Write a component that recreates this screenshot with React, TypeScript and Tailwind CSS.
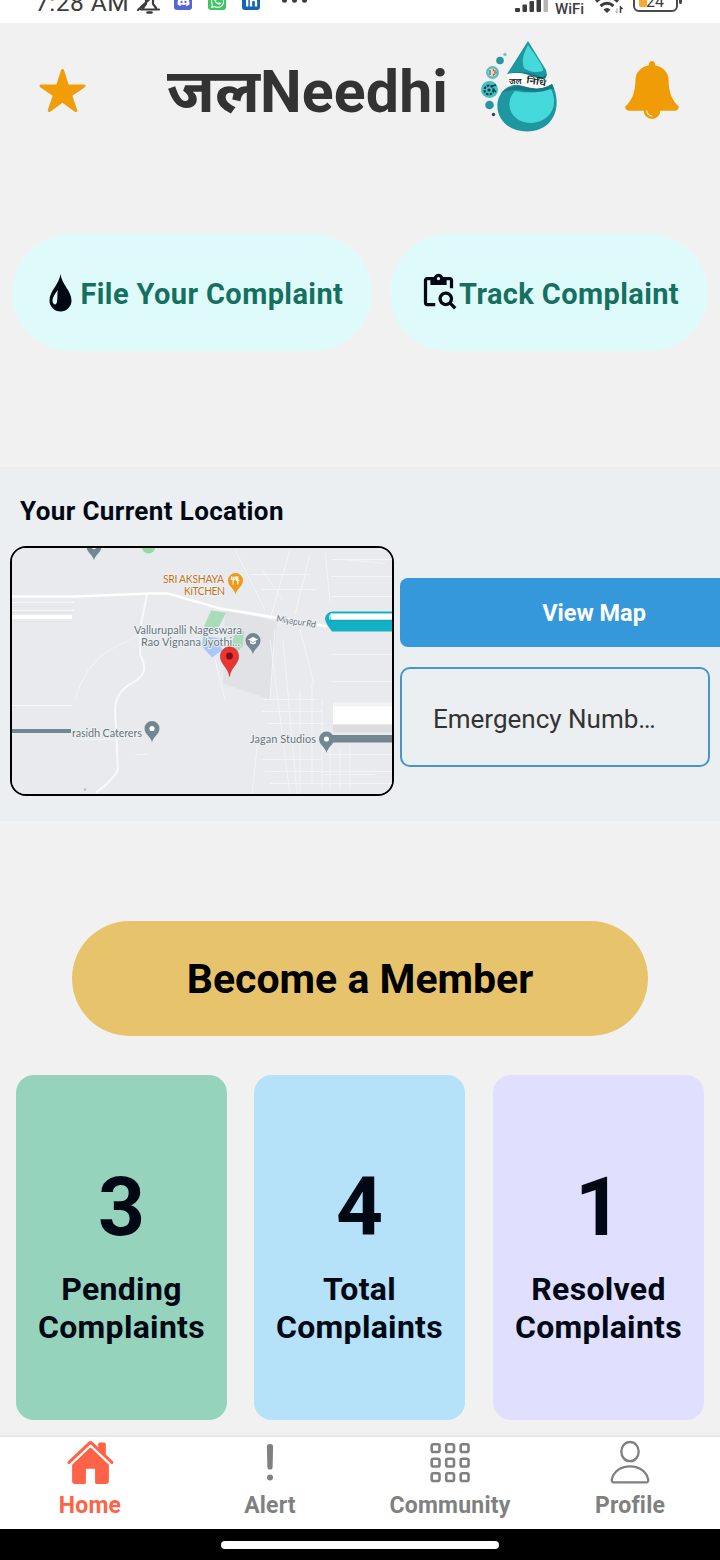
import type { ReactNode } from "react";
import { IoHome, IoStar } from "react-icons/io5";
import { FaDiscord, FaLinkedinIn, FaWhatsapp } from "react-icons/fa";

function StatusBar() {
  return (
    <div className="relative h-[23px] shrink-0 overflow-hidden bg-white text-[#3c3c3c]">
      <span className="absolute left-[35px] top-[-11px] text-[24.500px] leading-7 tracking-[0.5px] whitespace-nowrap">7:28 AM</span>
      <svg className="absolute left-[136px] top-[-12px]" width="26" height="26" viewBox="0 0 26 26" fill="none" stroke="#3c3c3c" strokeWidth="2.2" strokeLinecap="round">
        <path d="M5 21.500h18M7 20l3-4V9M20 20l-3-4V8M20 5L2 22" />
        <path d="M11.500 24.500h4" strokeWidth="2.5" />
      </svg>
      <div className="absolute left-[174px] top-[-8px] flex h-[18px] w-[18px] items-center justify-center rounded-[3px] bg-[#5865d8] text-white">
        <FaDiscord size={13} />
      </div>
      <div className="absolute left-[208px] top-[-8px] flex h-[18px] w-[18px] items-center justify-center rounded-[3px] bg-[#3cc763] text-white">
        <FaWhatsapp size={15} />
      </div>
      <div className="absolute left-[242px] top-[-8px] flex h-[18px] w-[18px] items-center justify-center rounded-[3px] bg-[#1763b4] text-white">
        <FaLinkedinIn size={13} />
      </div>
      <svg className="absolute left-[280px] top-0" width="30" height="4" viewBox="0 0 30 4" fill="#3c3c3c">
        <circle cx="4.500" cy="0.300" r="2.500" />
        <circle cx="14.500" cy="0.300" r="2.500" />
        <circle cx="24.500" cy="0.300" r="2.500" />
      </svg>
      <svg className="absolute left-[515px] top-0" width="34" height="13" viewBox="0 0 34 13" fill="#3c3c3c">
        <rect x="0" y="8" width="5" height="4" rx="1" />
        <rect x="7.500" y="4.500" width="4.500" height="7.500" rx="1" />
        <rect x="14.500" y="1" width="4.500" height="11" rx="1" />
        <rect x="21.500" y="-4" width="4.500" height="16" rx="1" />
        <rect x="28.500" y="-6" width="4.500" height="18" rx="1" fill="#b5b5b5" />
      </svg>
      <span className="absolute left-[555px] top-px text-[15px] font-medium leading-[17px]">WiFi</span>
      <svg className="absolute left-[594px] top-0" width="30" height="14" viewBox="0 0 30 14" fill="none" stroke="#3c3c3c" strokeWidth="3">
        <path d="M2 1.500Q13 -8 24 1.500" />
        <path d="M6.500 6Q13 0.500 19.500 6" />
        <path d="M9.500 9.500Q13 6.500 16.500 9.500L13 13z" fill="#3c3c3c" stroke="none" />
        <path d="M26.500 13V7l2 2" strokeWidth="1.500" />
        <path d="M23 8v5l-1.500-2" strokeWidth="1" stroke="#aaa" />
      </svg>
      <div className="absolute left-[633px] top-[-11px] h-[23px] w-[45px] rounded-[6px] border-2 border-[#4a4a4a]" />
      <div className="absolute left-[639px] top-[-7px] h-[14px] w-[8px] rounded-[2px] bg-[#f7a938]" />
      <div className="absolute left-[679px] top-[-4px] h-[8px] w-[3px] rounded bg-[#4a4a4a]" />
      <span className="absolute left-[646px] top-[-7px] text-[16px] leading-[18px]">24</span>
    </div>
  );
}

function DropLogo() {
  return (
    <svg width="80" height="94" viewBox="480 40 80 94">
      <path d="M528 41L546 70Q549 80 540 79Q520 71 507 74Z" fill="#1f97a0" />
      <path d="M528 45C522 56 522 62 524 68Q532 74 543 71Q545 68 528 45Z" fill="#46d9dc" />
      <path d="M507 74Q528 69 545 79L547 74L540 79Q524 70 507 74Z" fill="#14737c" />
      <path d="M552 84C562 102 557 131 527 131.500C497 131 490 102 505 89Q513 83 522 85Q540 92 552 84Z" fill="#1f97a0" />
      <path d="M501 93Q512 83 530 87Q543 90 552 84L554 89Q535 94 520 90Q510 89 501 93Z" fill="#157882" />
      <path d="M515 91C503 103 511 123 531 123C551 122 559 105 551 89Q535 95 515 91Z" fill="#46d9dc" />
      <path d="M506 75Q520 70 535 78Q546 83 550 78L551 83Q542 92 523 86Q515 83 506 85Q511 79 506 75Z" fill="#fff" />
      <text x="509" y="83.500" fontSize="8.500" fontWeight="600" fill="#222">जल</text>
      <text x="526" y="83" fontSize="9" fontWeight="600" fill="#222" textLength="20" lengthAdjust="spacingAndGlyphs" transform="rotate(9 526 83)">निधि</text>
      <circle cx="505" cy="54.500" r="1.800" fill="#7cc5c9" />
      <circle cx="500" cy="60.500" r="3.800" fill="#2a95a0" />
      <circle cx="492.500" cy="72.500" r="6.500" fill="#5cbcc0" />
      <circle cx="492.500" cy="72.500" r="4" fill="#e8d7c0" />
      <path d="M490 70v5M493 69.500l3 3-3 3" stroke="#4d6f9b" strokeWidth="1.300" fill="none" />
      <path d="M495 70v4" stroke="#e08a3c" strokeWidth="1.500" />
      <circle cx="489.500" cy="89.500" r="8.500" fill="#42bfc0" />
      <circle cx="489" cy="90" r="4.500" fill="none" stroke="#0c3d48" strokeWidth="2" strokeDasharray="2.500 1.200" />
      <circle cx="489" cy="90" r="1.600" fill="#0c3d48" />
      <path d="M492 86l4-1M494 90l2 2" stroke="#0c3d48" strokeWidth="1.500" />
      <circle cx="489.500" cy="105" r="4.300" fill="#2a95a0" />
      <circle cx="493.500" cy="114.500" r="1.700" fill="#1c4c52" />
    </svg>
  );
}

function Bell() {
  return (
    <svg width="58" height="58" viewBox="0 0 1792 1792" fill="#ef9c06">
      <path d="M912 1696q0-16-16-16-59 0-101.500-42.500t-42.500-101.500q0-16-16-16t-16 16q0 73 51.500 124.500t124.500 51.500q16 0 16-16zm816-288q0 52-38 90t-90 38h-448q0 106-75 181t-181 75-181-75-75-181h-448q-52 0-90-38t-38-90q50-42 91-88t85-119.500 74.500-158.500 50-206 19.500-260q0-152 117-282.500t307-158.500q-8-19-8-39 0-40 28-68t68-28 68 28 28 68q0 20-8 39 190 28 307 158.500t117 282.500q0 139 19.500 260t50 206 74.500 158.500 85 119.500 91 88z" />
    </svg>
  );
}

function Header() {
  return (
    <header className="flex h-[138px] shrink-0 items-center text-[#333]">
      <IoStar size={49} color="#f09d08" className="-mt-1 ml-[38px]" />
      <h1 className="-mt-[2px] ml-[80px] flex w-[282px] items-baseline text-[59px] font-bold leading-[68px] whitespace-nowrap">
        <span className="text-[61px]">जल</span>
        <span className="tracking-[0.15px]">Needhi</span>
      </h1>
      <div className="ml-[31px] mt-[-10px]"><DropLogo /></div>
      <div className="ml-[63px] mt-[-4px]"><Bell /></div>
    </header>
  );
}

function Actions() {
  return (
    <div className="mt-[73px] flex h-[117px] shrink-0 gap-[18px] pl-3 text-[29px] font-bold tracking-[0.39px] text-[#15705f]">
      <button className="flex w-[360px] items-center rounded-full bg-[#dffafb] pl-[37px]">
        <svg width="23" height="38" viewBox="0 0 23 38">
          <path d="M11.500 0C12.500 10 22.500 17 22.500 26.500A11 11 0 0 1 .5 26.500C.5 17 10.500 10 11.500 0Z" fill="#000814" />
          <path d="M8.800 16C6 20 3.500 23 3.500 26.500C3.500 29 5 30.500 6.500 30.500C9 29 8 22 8.800 16Z" fill="#dffafb" />
        </svg>
        <span className="ml-[8.500px] mt-1 whitespace-nowrap">File Your Complaint</span>
      </button>
      <button className="flex w-[318px] items-center rounded-full bg-[#dffafb] pl-[29px]">
        <svg width="39" height="39" viewBox="0 0 24 24" fill="#000814" className="-mt-[2px]">
          <path d="M5 5h2v3h10V5h2v5h2V5c0-1.100-.9-2-2-2h-4.180C14.400 1.840 13.300 1 12 1s-2.400.84-2.820 2H5c-1.100 0-2 .9-2 2v14c0 1.100.9 2 2 2h5v-2H5V5zm7-2c.55 0 1 .45 1 1s-.45 1-1 1-1-.45-1-1 .45-1 1-1z" />
          <path d="M20.300 18.900c.4-.7.7-1.500.7-2.400 0-2.500-2-4.500-4.500-4.500S12 14 12 16.500s2 4.500 4.500 4.500c.9 0 1.700-.3 2.400-.7l2.700 2.700 1.400-1.400-2.700-2.700zm-3.800.1c-1.400 0-2.500-1.100-2.500-2.500s1.100-2.500 2.500-2.500 2.500 1.100 2.500 2.500-1.100 2.500-2.500 2.500z" />
        </svg>
        <span className="ml-px mt-1 whitespace-nowrap">Track Complaint</span>
      </button>
    </div>
  );
}

function Pin({ x, y, color, children }: { x: number; y: number; color: string; children?: ReactNode }) {
  return (
    <g transform={`translate(${x} ${y})`}>
      <path d="M0 14C-1 8-7.500 6-7.500 0A7.500 7.500 0 0 1 7.500 0C7.500 6 1 8 0 14Z" fill={color} />
      {children ?? <circle r="2.600" fill="#fff" />}
    </g>
  );
}

const LANES = [
  "M270 640l20 155M283 640l14 155M264 700h52M262 712h60M268 724h56M300 690v105M312 684v100M322 700v90",
  "M262 760h60M265 772h70M270 784h60M258 740l-6 55M330 745v45M340 750v40M350 745v45M325 755h55M325 775h50",
  "M235 550l30 60M290 550l-20 70M310 555l-15 60M325 552l5 50M275 630l-5 70M300 630l14 55M250 575h60M262 590h55",
  "M75 700Q85 665 110 650L160 625M80 740h40M135 755h12M215 660l10 40M262 570l20 30M345 560l40 4",
];

function LocationMap() {
  return (
    <svg width="380" height="246" viewBox="12 548.500 380 246" fontFamily="Lato, 'Open Sans', sans-serif">
      <rect x="12" y="548" width="380" height="247" fill="#e8eaed" />
      <path d="M225 610l52 12-7 78-47-16z" fill="#e0e2e5" />
      {LANES.map((d) => (
        <path key={d} d={d} fill="none" stroke="#f3f4f6" strokeWidth="1" />
      ))}
      <g fill="none" stroke="#f3f4f6" strokeWidth="1">
        <path d="M331 560h61M331 577h61M331 597h61M331 655h61M331 682h61M331 755h61M331 772h61M331 784h61" />
        <path d="M12 603h62M12 611h62M12 706h60" stroke="#f7f8f9" />
        <path d="M12 607h60M12 613h60M12 622h60" stroke="#e2e2e6" />
      </g>
      <path d="M12 597H75L150 594H168L220 609L275 618L327 627" fill="none" stroke="#fff" strokeWidth="2.600" />
      <path d="M12 617.500h60" stroke="#fff" strokeWidth="4" />
      <path d="M147 595L141 625L140 655C149 672 143 678 128 686C110 699 116 715 116 730L118 770Q112 782 96 793" fill="none" stroke="#f8f9fa" strokeWidth="2" />
      <path d="M211 611l15 2-10 20-12-6zM236 629l8 3-1 14-8 9-3-12z" fill="#a9dcb8" />
      <path d="M203 636l16 3 3 12-10 7-10-11z" fill="#a7c8f8" />
      <path d="M142 548h13a6.500 6 0 0 1-13 0z" fill="#93d9a3" />
      <path d="M332 612h60v20h-60q-7-9-7-13 1-6 7-7z" fill="#12b0c4" />
      <path d="M331 614h61v7h-61z" fill="#fff" />
      <path d="M330 621h62" stroke="#12a5b8" strokeWidth="1.600" />
      <path d="M332 614q-3 2-2 6" stroke="#c6edf2" strokeWidth="1.500" fill="none" />
      <rect x="333" y="706" width="59" height="19" fill="#fff" />
      <path d="M333 705h59" stroke="#f2f3f4" strokeWidth="4" />
      <rect x="333" y="725" width="59" height="8" fill="#dcdde0" />
      <rect x="325" y="735.500" width="67" height="7.500" fill="#738793" />
      <path d="M12 731.500H71" stroke="#738793" strokeWidth="4" />
      <Pin x={94} y={547} color="#738793" />
      <Pin x={152} y={729} color="#738793" />
      <Pin x={326.500} y={739.500} color="#738793" />
      <Pin x={235.500} y={581} color="#ef9a16">
        <path d="M-2.300-4v8M2.300-4v8M-4-4v3h3.500v-3M1-4v4h3" stroke="#fff" strokeWidth="1.200" fill="none" />
      </Pin>
      <Pin x={253} y={641} color="#738793">
        <path d="M-5-1L0-3.500L5-1L0 1.500ZM-3 .8v2L0 4L3 2.800v-2L0 2.300Z" fill="#fff" />
      </Pin>
      <g stroke="#eef0f2" strokeWidth="2" paintOrder="stroke" fontSize="11" fill="#66747d">
        <text x="163" y="583" fill="#c4741c" fontSize="10.500" textLength="61">SRI AKSHAYA</text>
        <text x="184" y="595" fill="#c4741c" fontSize="10.500" textLength="41">KITCHEN</text>
        <text x="134" y="634" textLength="108">Vallurupalli Nageswara</text>
        <text x="141" y="646" textLength="99">Rao Vignana Jyothi...</text>
        <text x="72" y="737" textLength="70">rasidh Caterers</text>
        <text x="250" y="743" textLength="66">Jagan Studios</text>
        <text x="276" y="622" fontSize="9" textLength="40" transform="rotate(9 276 622)">Miyapur Rd</text>
      </g>
      <path d="M229.500 677C228.500 668 220.300 665 220.300 656.500A9.200 9.200 0 0 1 238.700 656.500C238.700 665 230.500 668 229.500 677Z" fill="#ea3535" stroke="#b92626" strokeWidth="0.500" />
      <circle cx="229.500" cy="656.500" r="3.400" fill="#7d1010" />
      <circle cx="85" cy="790" r="1.200" fill="#b5bcc2" />
    </svg>
  );
}

function LocationSection() {
  return (
    <section className="mt-[116px] h-[354px] shrink-0 overflow-hidden bg-[#ebeff1] pt-[29px]">
      <h2 className="pl-5 text-[26px] font-bold leading-[30px] tracking-[0.38px] text-[#000814]">Your Current Location</h2>
      <div className="mt-5 flex pl-[10px]">
        <div className="h-[250px] w-[384px] shrink-0 overflow-hidden rounded-[16px] border-2 border-black">
          <LocationMap />
        </div>
        <div className="ml-[6px] mt-8 flex w-[310px] shrink-0 flex-col gap-5">
          <button className="h-[69px] w-[388px] rounded-[8px] bg-[#3498db] pt-[2px] text-[23.500px] font-bold text-white">View Map</button>
          <div className="flex h-[100px] items-center rounded-[10px] border-2 border-[#4596c9] pl-[31px] pt-1 text-[26px] text-[#333]">Emergency Numb…</div>
        </div>
      </div>
    </section>
  );
}

const STATS = [
  { value: 3, label: "Pending", tone: "bg-[#95d3bd]" },
  { value: 4, label: "Total", tone: "bg-[#b5e1f9]" },
  { value: 1, label: "Resolved", tone: "bg-[#e0e0fe] ml-px" },
];

function Stats() {
  return (
    <div className="mx-4 mt-[39px] flex h-[345px] shrink-0 gap-[27px] text-[#000814]">
      {STATS.map((s) => (
        <div key={s.label} className={`flex w-[211px] flex-col items-center rounded-[18px] pt-[84px] text-center font-bold ${s.tone}`}>
          <span className="text-[82px] leading-[96px]">{s.value}</span>
          <span className="mt-[15px] text-[32px] leading-[38px] tracking-[0.3px]">
            {s.label}
            <br />
            Complaints
          </span>
        </div>
      ))}
    </div>
  );
}

function AlertIcon() {
  return (
    <svg width="48" height="48" viewBox="0 -2 48 48" fill="currentColor">
      <path d="M24 4a3 3 0 0 1 3.100 3.100L26.600 27a2.600 2.600 0 0 1-5.200 0L20.900 7.100A3 3 0 0 1 24 4Z" />
      <circle cx="24" cy="37.500" r="3" />
    </svg>
  );
}

const GRID = [6.500, 21, 35.500];

function AppsIcon() {
  return (
    <svg width="48" height="48" viewBox="0.500 -2 48 48" fill="none" stroke="currentColor" strokeWidth="2.600">
      {GRID.map((y) => GRID.map((x) => <rect key={`${x}-${y}`} x={x - 0.3} y={y - 2.300} width="7.800" height="7.800" rx="1.800" />))}
    </svg>
  );
}

function PersonIcon() {
  return (
    <svg width="48" height="48" viewBox="0 -2 48 48" fill="none" stroke="currentColor" strokeWidth="2.300" strokeLinejoin="round">
      <ellipse cx="24" cy="11.600" rx="8.700" ry="9.600" />
      <path d="M24 26.400C14 26.400 7.500 32 5.800 39.500C5.500 41.300 6.300 42.300 7.800 42.300H40.200C41.700 42.300 42.500 41.300 42.200 39.500C40.500 32 34 26.400 24 26.400Z" />
    </svg>
  );
}

const TABS = [
  { label: "Home", icon: <IoHome size={49} className="-mb-px" />, tone: "text-[#ff6347]" },
  { label: "Alert", icon: <AlertIcon />, tone: "text-[#808080]" },
  { label: "Community", icon: <AppsIcon />, tone: "text-[#808080]" },
  { label: "Profile", icon: <PersonIcon />, tone: "text-[#808080]" },
];

function TabBar() {
  return (
    <nav className="mt-[15px] grid h-[94px] shrink-0 grid-cols-4 border-t-2 border-[#e7e7e7] bg-white">
      {TABS.map(({ label, icon, tone }) => (
        <div key={label} className={`flex flex-col items-center pt-[1px] ${tone}`}>
          {icon}
          <span className="mt-[6px] text-[23px] font-bold leading-[27px] tracking-[0.2px]">{label}</span>
        </div>
      ))}
    </nav>
  );
}

export default function App() {
  return (
    <div className="flex h-[1560px] w-[720px] flex-col overflow-hidden bg-[#f1f1f1] font-[Roboto,'Noto_Sans',sans-serif]">
      <StatusBar />
      <Header />
      <Actions />
      <LocationSection />
      <button className="mx-[72px] mt-[100px] h-[115px] shrink-0 rounded-full bg-[#e7c46b] pt-[2px] text-[41px] font-bold text-black">
        Become a Member
      </button>
      <Stats />
      <TabBar />
      <div className="flex h-[31px] shrink-0 justify-center bg-black pt-3">
        <div className="h-2 w-[278px] rounded-full bg-white" />
      </div>
    </div>
  );
}
